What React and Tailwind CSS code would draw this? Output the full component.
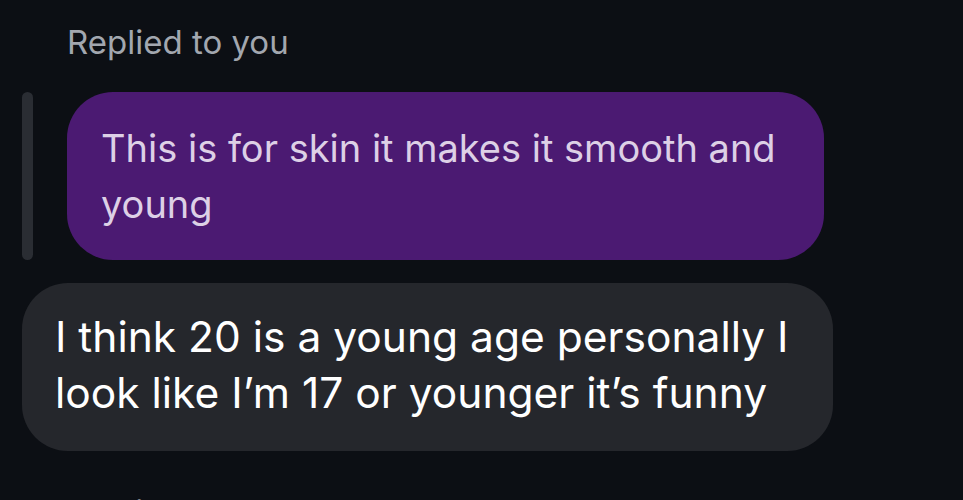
export default function App() {
  return (
    <div className="h-[500px] w-[963px] overflow-hidden bg-[#0c0f14] font-['Inter',sans-serif]">
      <div className="pl-[22px] pt-[22px]">
        {/* reply header */}
        <p className="ml-[45px] text-[33px] leading-[40px] text-[#a2a7af]">Replied to you</p>

        {/* quoted message */}
        <div className="mt-[30px] flex gap-[34px]">
          <div className="w-[11px] shrink-0 rounded-full bg-[#2a2d33]" />
          <div className="w-[757px] rounded-[46px] bg-[#4b1a72] px-[34px] py-[28px] text-[38px] leading-[56px] text-[#ddd0e6]">
            This is for skin it makes it smooth and young
          </div>
        </div>

        {/* reply */}
        <div className="mt-[23px] w-[811px] rounded-[46px] bg-[#25272c] px-[33px] pb-[30px] pt-[26px] text-[42.5px] leading-[56px] text-white">
          I think 20 is a young age personally I look like I’m 17 or younger it’s funny
        </div>

        <p className="ml-[45px] mt-[41px] text-[33px] leading-[40px] text-[#a2a7af]">Replied to you</p>
      </div>
    </div>
  );
}
